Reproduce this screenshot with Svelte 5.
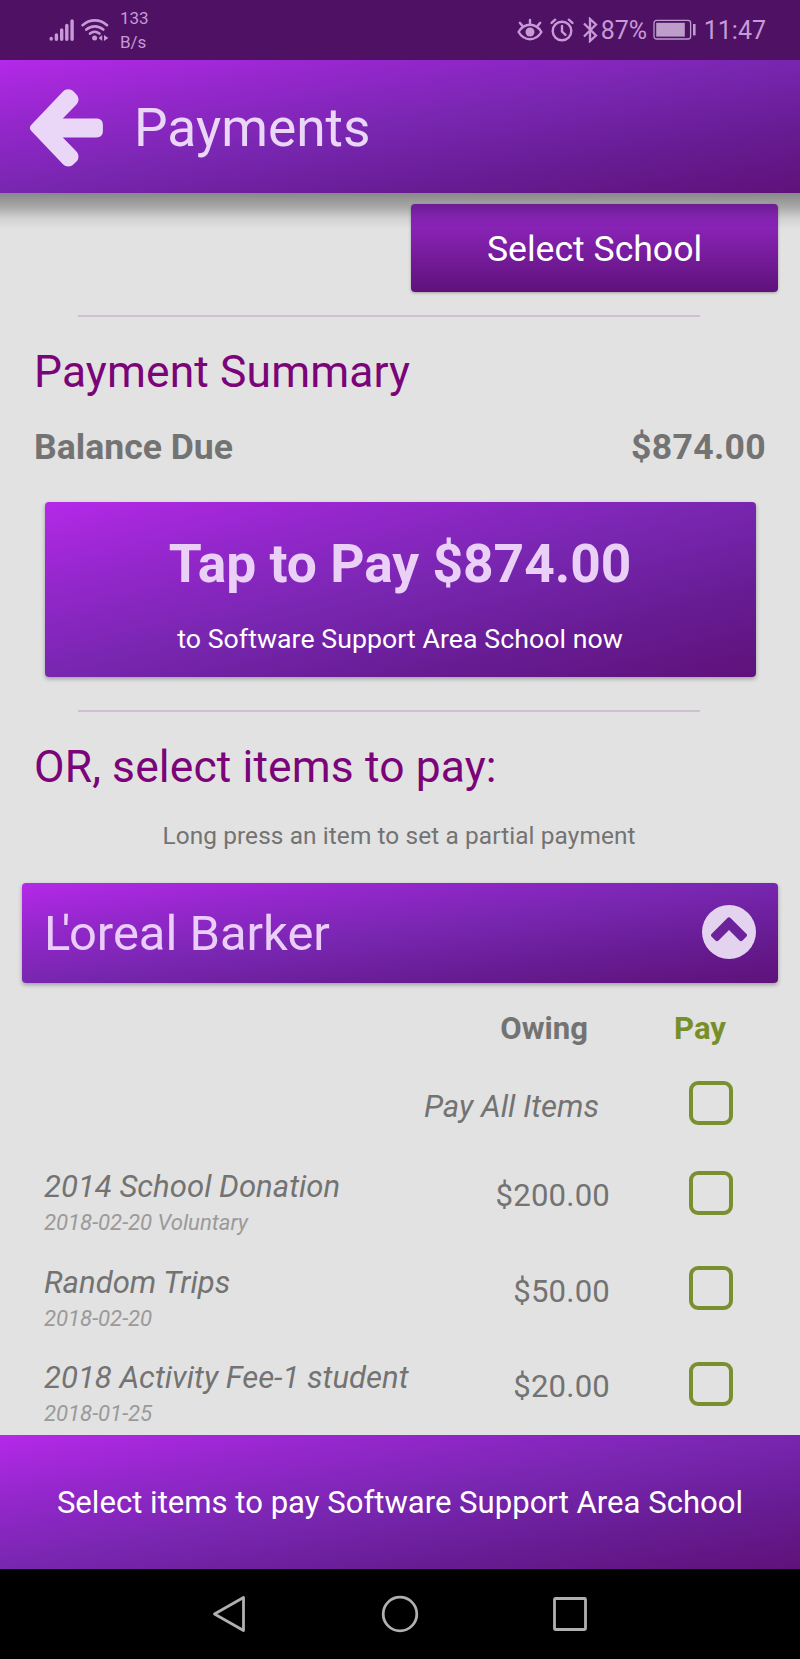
<script>
    const school = 'Software Support Area School';
    const balance = 874;

    let open = $state(true);
    let items = $state([
        { name: '2014 School Donation', note: '2018-02-20 Voluntary', owing: 200, pay: false },
        { name: 'Random Trips', note: '2018-02-20', owing: 50, pay: false },
        { name: '2018 Activity Fee-1 student', note: '2018-01-25', owing: 20, pay: false },
    ]);

    const allPaid = $derived(items.every((item) => item.pay));

    const money = (n) => '$' + n.toFixed(2);

    function toggleAll() {
        const next = !allPaid;
        items.forEach((item) => (item.pay = next));
    }
</script>

<div class="phone">
    <div class="status">
        <svg class="signal" width="26" height="24" viewBox="0 0 26 24">
            <g stroke="currentColor" stroke-width="3.4" stroke-linecap="round">
                <path d="M2.2 20.5v.6M7.4 17v4.3M12.7 12v9.3M17.8 7.500v13.800M23.1 3v18.300" />
            </g>
        </svg>
        <svg class="wifi" width="28" height="24" viewBox="0 0 28 24">
            <g fill="none" stroke="currentColor" stroke-width="2.6" stroke-linecap="round">
                <path d="M1.6 7.2c7.2-6.4 17.2-6.4 24.4 0" />
                <path d="M5.3 11.6c5-4.3 12-4.3 17 0" />
                <path d="M9 15.6c3-2.4 6.4-2.4 9.4 0" />
            </g>
            <circle cx="13.6" cy="20" r="2.5" fill="currentColor" />
            <path d="M21.2 17v6l-3.6-3zM23 17v6l4.4-3z" fill="currentColor" />
        </svg>
        <div class="speed"><span>133</span><span>B/s</span></div>

        <svg class="eye" width="26" height="24" viewBox="0 0 26 24">
            <g fill="none" stroke="currentColor" stroke-width="2.4" stroke-linecap="round">
                <path d="M1.6 14c5.600-9.600 17.200-9.600 22.800 0-5.600 9.600-17.200 9.600-22.800 0z" />
                <path d="M13 5.5V2M5.2 7.6L2.8 4.800M20.800 7.600l2.400-2.800" />
            </g>
            <circle cx="13" cy="14" r="4.500" fill="currentColor" />
        </svg>
        <svg class="alarm" width="24" height="24" viewBox="0 0 24 24">
            <g fill="none" stroke="currentColor" stroke-width="2.4" stroke-linecap="round">
                <circle cx="12" cy="13" r="9.300" />
                <path d="M12 8v5.500l3.500 3.300M1.600 4.900l3.600-3.200M22.400 4.900l-3.600-3.200" />
            </g>
        </svg>
        <svg class="bt" width="16" height="26" viewBox="0 0 16 26">
            <path d="M2 6.500l12 12-6 5.500V2l6 5.500-12 12" fill="none" stroke="currentColor" stroke-width="2.300" />
        </svg>
        <span class="percent">87%</span>
        <svg class="battery" width="44" height="22" viewBox="0 0 44 22">
            <rect x="1" y="1.400" width="36.600" height="18.600" rx="2.500" fill="none" stroke="currentColor" stroke-width="1.300" />
            <rect x="3.200" y="3.800" width="28.600" height="13.800" fill="currentColor" />
            <path d="M41.300 5v11.400" stroke="currentColor" stroke-width="2.600" />
        </svg>
        <span class="time">11:47</span>
    </div>

    <header class="grad">
        <svg class="back" width="76" height="80" viewBox="0 0 76 80">
            <path
                d="M2.600 36.500L34 3.600c3.200-3 7.400-3 10.600 0l2.600 2.600c3 3 3 7.400 0 10.600L33.800 30.400H67.500c4 0 6.400 2.400 6.400 6.400v6.200c0 4-2.400 6.400-6.400 6.400H33.800l13.400 13.800c3 3.200 3 7.600 0 10.600l-2.600 2.400c-3.200 3-7.400 3-10.600 0L2.600 43.300c-2.400-2.400-2.400-4.400 0-6.800z"
                fill="currentColor"
            />
        </svg>
        <h1>Payments</h1>
    </header>

    <main>
        <button class="select">Select School</button>
        <hr />
        <h2>Payment Summary</h2>
        <div class="balance">
            <span>Balance Due</span>
            <span class="total">{money(balance)}</span>
        </div>
        <button class="tap grad">
            <strong>Tap to Pay {money(balance)}</strong>
            <span>to {school} now</span>
        </button>
        <hr class="second" />
        <h2>OR, select items to pay:</h2>
        <p class="hint">Long press an item to set a partial payment</p>

        <button class="student grad" onclick={() => (open = !open)}>
            <span><span class="kern">L</span>'oreal Barker</span>
            <svg width="54" height="54" viewBox="0 0 54 54" class:closed={!open}>
                <circle cx="27" cy="27" r="27" fill="currentColor" />
                <path
                    d="M25.200 13.200c1.200-1.200 2.400-1.200 3.600 0L44.300 28.700c1 1 1 2 0 3L40.500 35.500c-1 1-2 1-3 0L27 25 16.500 35.500c-1 1-2 1-3 0L9.700 31.700c-1-1-1-2 0-3z"
                    fill="#6c229a"
                />
            </svg>
        </button>

        {#if open}
            <div class="cols">
                <span class="owing">Owing</span>
                <span class="pay">Pay</span>
            </div>
            <div class="row all">
                <span class="label">Pay All Items</span>
                <button class="check" class:on={allPaid} onclick={toggleAll} aria-label="Pay all items"></button>
            </div>
            {#each items as item}
                <div class="row">
                    <div class="item">
                        <div class="name">{item.name}</div>
                        <div class="note">{item.note}</div>
                    </div>
                    <span class="amount">{money(item.owing)}</span>
                    <button class="check" class:on={item.pay} onclick={() => (item.pay = !item.pay)} aria-label={item.name}></button>
                </div>
            {/each}
        {/if}
    </main>

    <footer class="grad">Select items to pay {school}</footer>

    <nav>
        <svg width="36" height="40" viewBox="0 0 36 40">
            <path d="M32.500 3.500v33L3.500 20z" />
        </svg>
        <svg width="40" height="40" viewBox="0 0 40 40">
            <circle cx="20" cy="20" r="16.800" />
        </svg>
        <svg width="36" height="36" viewBox="0 0 36 36">
            <rect x="2.500" y="2.500" width="31" height="31" rx="1" />
        </svg>
    </nav>
</div>

<style>
    :global(body) {
        margin: 0;
        background: #000;
    }
    .phone {
        width: 800px;
        height: 1659px;
        display: flex;
        flex-direction: column;
        overflow: hidden;
        background: #e2e2e2;
        color: #737373;
        font-family: Roboto, sans-serif;
    }
    .phone button {
        display: block;
        border: 0;
        padding: 0;
        font-family: inherit;
        cursor: pointer;
    }
    .grad {
        background: linear-gradient(to bottom right, #b429e8 0%, #9327cb 25%, #7826b0 50%, #671c93 75%, #5f127a 100%);
    }
    svg {
        display: block;
        flex: none;
    }

    .status {
        display: flex;
        align-items: center;
        height: 60px;
        flex: none;
        box-sizing: border-box;
        padding: 0 34px 0 49px;
        background: #4f1164;
        color: #c79ad6;
    }
    .wifi {
        margin-left: 6px;
    }
    .speed {
        display: flex;
        flex-direction: column;
        margin: 0 auto 1px 11px;
        font-size: 17px;
        line-height: 24px;
    }
    .alarm {
        margin-left: 7px;
    }
    .bt {
        margin-left: 8px;
    }
    .percent {
        width: 48px;
        margin-left: 3px;
        font-size: 25px;
    }
    .battery {
        margin-left: 4px;
        color: #bd9dca;
    }
    .time {
        margin-left: 7px;
        font-size: 25px;
    }

    header {
        position: relative;
        z-index: 1;
        display: flex;
        align-items: center;
        height: 133px;
        flex: none;
        box-sizing: border-box;
        padding: 2px 29px 0;
        color: #ead6f6;
    }
    /* soft shadow the toolbar casts over the scrolling content */
    header::after {
        content: '';
        position: absolute;
        left: 0;
        right: 0;
        top: 100%;
        height: 36px;
        background: linear-gradient(rgba(0, 0, 0, 0.4), rgba(0, 0, 0, 0.27) 35%, rgba(0, 0, 0, 0.08) 70%, transparent);
        pointer-events: none;
    }
    h1 {
        margin: 0 0 0 29px;
        font-size: 53.300px;
        font-weight: 400;
    }

    main {
        height: 1242px;
        flex: none;
        overflow: hidden;
    }
    .phone .select {
        width: 367px;
        height: 88px;
        margin: 11px 22px 0 auto;
        padding-top: 2px;
        border-radius: 4px;
        background: linear-gradient(#9829cc, #5f127a);
        box-shadow: 0 1px 3px rgba(0, 0, 0, 0.3);
        color: #fff;
        font-size: 35.600px;
    }
    hr {
        width: 622px;
        height: 2px;
        margin: 23px 0 0 78px;
        border: 0;
        background: #cdc1d0;
    }
    hr.second {
        margin-top: 33px;
    }
    h2 {
        margin: 29px 0 0 34px;
        font-size: 44.400px;
        line-height: 52px;
        font-weight: 400;
        letter-spacing: 0.120px;
        color: #7a0478;
    }
    .balance {
        display: flex;
        justify-content: space-between;
        margin: 28px 34px 0;
        font-size: 35.600px;
        line-height: 42px;
        font-weight: 700;
    }
    .total {
        letter-spacing: 0.300px;
    }
    .phone .tap {
        display: flex;
        flex-direction: column;
        align-items: center;
        width: 711px;
        height: 175px;
        margin: 34px auto 0;
        padding-top: 31px;
        border-radius: 4px;
        box-shadow: 0 2px 4px rgba(0, 0, 0, 0.3);
    }
    .tap strong {
        font-size: 53.300px;
        line-height: 62px;
        color: #ead0f6;
    }
    .tap span {
        margin-top: 28px;
        font-size: 26.700px;
        line-height: 32px;
        letter-spacing: 0.050px;
        color: #fff;
    }
    .hint {
        margin: 28px 0 0;
        font-size: 24.400px;
        line-height: 30px;
        letter-spacing: 0.100px;
        text-align: center;
        padding-right: 2px;
    }
    .phone .student {
        display: flex;
        align-items: center;
        justify-content: space-between;
        width: 756px;
        height: 100px;
        margin: 32px 22px 0;
        padding: 0 22px;
        border-radius: 4px;
        box-shadow: 0 2px 4px rgba(0, 0, 0, 0.3);
        color: #e4d3ee;
        font-size: 48.900px;
    }
    .student span {
        color: #eacdf8;
    }
    /* pull the apostrophe in over the foot of the L */
    .kern {
        letter-spacing: -8.500px;
    }
    .student svg {
        margin-top: -2px;
    }
    .closed {
        transform: rotate(180deg);
    }

    .cols {
        display: flex;
        justify-content: flex-end;
        margin: 28px 74px 0 0;
        font-size: 31.100px;
        line-height: 36px;
        font-weight: 700;
    }
    .cols .pay {
        margin-left: 86px;
        color: #788f29;
    }
    .row {
        display: flex;
        align-items: center;
        height: 95.600px;
        padding: 0 67px 0 44px;
        font-size: 31.100px;
    }
    .row.all {
        height: 84px;
        margin-top: 14px;
    }
    .label {
        margin: 6px 90px 0 auto;
        font-style: italic;
    }
    .item {
        flex: 1;
        align-self: flex-start;
        padding-top: 24px;
        font-style: italic;
    }
    .name {
        line-height: 36px;
    }
    .note {
        margin-top: 3px;
        font-size: 22.200px;
        line-height: 28px;
        letter-spacing: -0.050px;
        color: #9a9a9a;
    }
    .amount {
        margin: 6px 79px 0 0;
        letter-spacing: 0.200px;
    }
    .phone .check {
        width: 44px;
        height: 44px;
        box-sizing: border-box;
        border: 4px solid #7a9030;
        border-radius: 9px;
        background: none;
    }
    .phone .check.on {
        background: #7a9030;
    }

    footer {
        display: flex;
        align-items: center;
        justify-content: center;
        height: 134px;
        flex: none;
        color: #fff;
        font-size: 31.100px;
    }
    nav {
        flex: 1;
        display: flex;
        align-items: center;
        justify-content: space-between;
        padding: 0 212px 0 211px;
        background: #000;
    }
    nav svg {
        fill: none;
        stroke: #b0b0b0;
        stroke-width: 2.800;
        stroke-linejoin: round;
    }
</style>
